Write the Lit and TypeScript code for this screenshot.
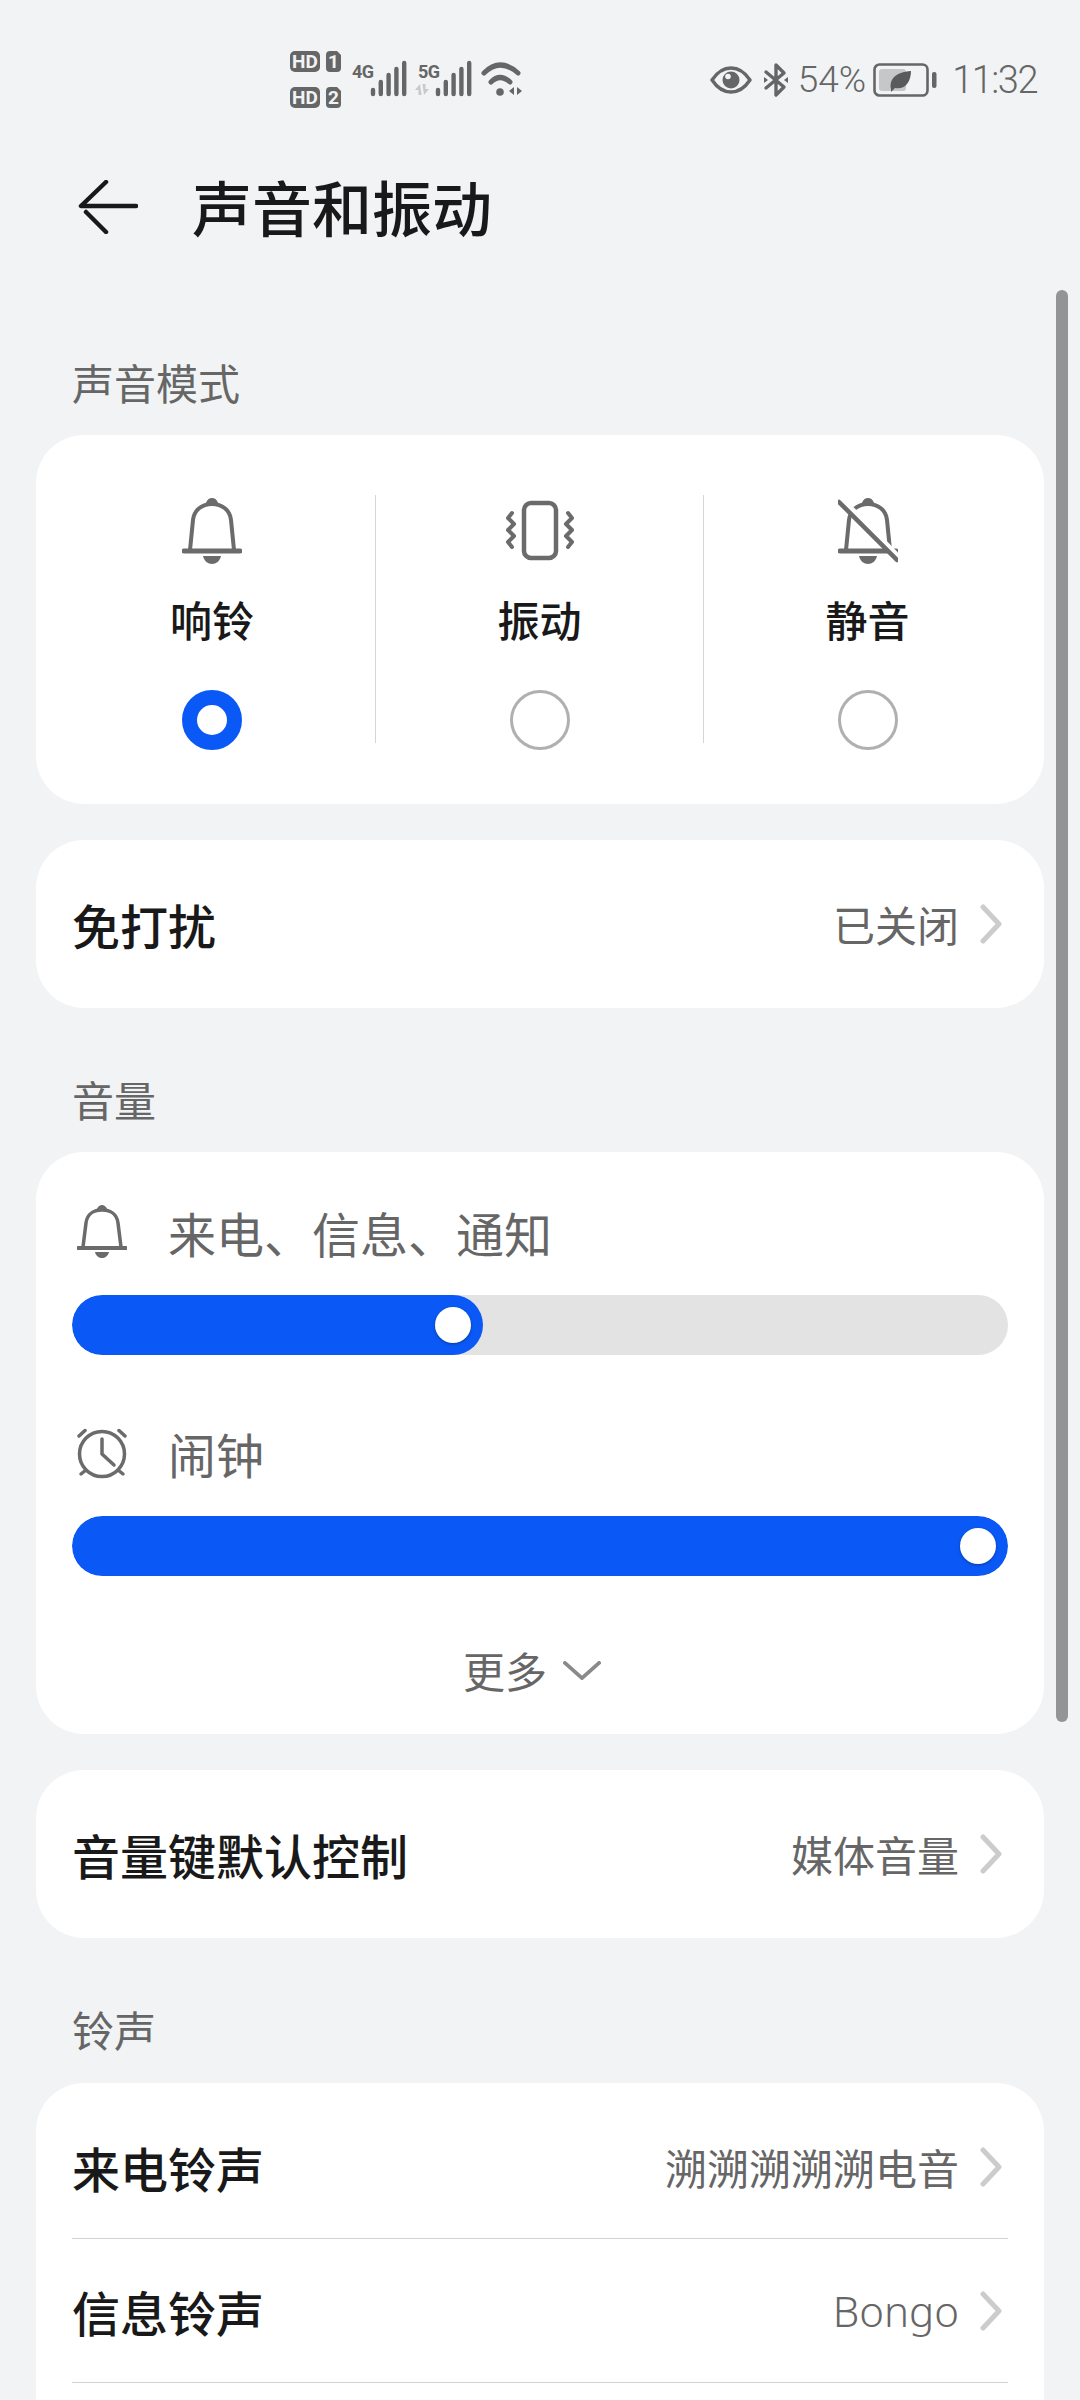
import { LitElement, html, css, svg } from "lit";
import { customElement } from "lit/decorators.js";

const bell = (slash = false) => html`<svg class="mode-icon" viewBox="0 0 60 66" width="60" height="66" fill="none" stroke="#6b6b6b" stroke-width="4" stroke-linecap="round">
  <path d="M8 52 L11 22 C12 12 20 6 30 6 C40 6 48 12 49 22 L52 52"></path>
  <path d="M2 53 H58" stroke-width="5"></path>
  <path d="M25 5 C26 2 28 1 30 1 C32 1 34 2 35 5 Z" fill="#6b6b6b" stroke-width="2"></path>
  <path d="M21 58 H39 C38 63 34 66 30 66 C26 66 22 63 21 58 Z" fill="#6b6b6b" stroke="none"></path>
  ${slash ? svg`<path d="M6 3 L60 58" stroke="#fff" stroke-width="5" stroke-linecap="butt"></path><path d="M1 4 L59 62" stroke-width="4.5"></path>` : null}
</svg>`;

const vibrate = html`<svg class="mode-icon" viewBox="0 0 68 66" width="68" height="66" fill="none" stroke="#6b6b6b" stroke-width="4.5" stroke-linecap="round" stroke-linejoin="round">
  <rect x="18" y="5" width="32" height="55" rx="7"></rect>
  <path d="M6 15 L2 20 L8 26 L2 32 L8 38 L2 44 L6 49" stroke-width="4"></path>
  <path d="M62 15 L66 20 L60 26 L66 32 L60 38 L66 44 L62 49" stroke-width="4"></path>
</svg>`;

const smallBell = html`<svg class="vol-icon" viewBox="0 0 50 54" width="50" height="54" fill="none" stroke="#6b6b6b" stroke-width="3.5" stroke-linecap="round">
  <path d="M6 42 L9 18 C10 9 17 5 25 5 C33 5 40 9 41 18 L44 42"></path>
  <path d="M1 43 H49" stroke-width="4"></path>
  <path d="M21 4 C22 2 24 1 25 1 C26 1 28 2 29 4 Z" fill="#6b6b6b" stroke-width="2"></path>
  <path d="M18 47 H32 C31 51 28 53 25 53 C22 53 19 51 18 47 Z" fill="#6b6b6b" stroke="none"></path>
</svg>`;

const alarm = html`<svg class="vol-icon" viewBox="0 0 50 52" width="50" height="52" fill="none" stroke="#6b6b6b" stroke-width="3.5" stroke-linecap="round">
  <circle cx="25" cy="27" r="22.5"></circle>
  <path d="M25 12 V27 L37 38"></path>
  <path d="M2 9 L8 3.5"></path>
  <path d="M48 9 L42 3.5"></path>
  <path d="M4 47 L9 43"></path>
  <path d="M46 47 L41 43"></path>
</svg>`;

const chevron = html`<svg class="chev" viewBox="0 0 22 40" width="22" height="40" fill="none" stroke="#cccccc" stroke-width="5" stroke-linecap="round" stroke-linejoin="round"><path d="M3 3 L19 20 L3 37"></path></svg>`;

const bars = (x0: number) => [0, 1, 2, 3, 4].map((i) => {
  const x = x0 + i * 7.8;
  const tops = [39, 31, 24, 18, 12];
  return svg`<line x1=${x} x2=${x} y1=${tops[i]} y2="43" stroke="#666" stroke-width="4.4" stroke-linecap="round"></line>`;
});

const leftStatus = html`<svg class="st-left" viewBox="0 0 232 57" width="232" height="57">
  <rect x="0" y="0" width="30" height="21" rx="5" fill="#666"></rect>
  <text x="15" y="17" class="hd" text-anchor="middle">HD</text>
  <path d="M36 4 a4 4 0 0 1 4 -4 h7 l4 4 v13 a4 4 0 0 1 -4 4 h-7 a4 4 0 0 1 -4 -4 z" fill="#666"></path>
  <text x="43.5" y="17" class="hd" text-anchor="middle">1</text>
  <rect x="0" y="36" width="30" height="21" rx="5" fill="#666"></rect>
  <text x="15" y="53" class="hd" text-anchor="middle">HD</text>
  <path d="M36 40 a4 4 0 0 1 4 -4 h7 l4 4 v13 a4 4 0 0 1 -4 4 h-7 a4 4 0 0 1 -4 -4 z" fill="#666"></path>
  <text x="43.5" y="53" class="hd" text-anchor="middle">2</text>
  <text x="62" y="27" class="net">4G</text>
  ${bars(83)}
  <text x="128" y="27" class="net">5G</text>
  ${bars(148)}
  <path d="M130 33 l-5 6 h3.5 v5 h3 z M134 44 l5 -6 h-3.5 v-5 h-3 z" fill="#c9c9c9"></path>
  <g fill="none" stroke="#666" stroke-width="5" stroke-linecap="round">
    <path d="M194 22 Q210 6 228 22"></path>
    <path d="M201 31 Q210 22 220 31"></path>
  </g>
  <circle cx="210" cy="41" r="3.8" fill="#666"></circle>
  <path d="M219 40 l5 -4 v8 z M232 40 l-5 -4 v8 z" fill="#666"></path>
</svg>`;

const eye = html`<svg viewBox="0 0 42 28" width="42" height="28">
  <path d="M2 14 C8 5 14 2 21 2 C28 2 34 5 40 14 C34 23 28 26 21 26 C14 26 8 23 2 14 Z" fill="none" stroke="#666" stroke-width="3.4" stroke-linejoin="round"></path>
  <circle cx="21" cy="14" r="8.5" fill="#666"></circle>
  <circle cx="18" cy="10.5" r="2.8" fill="#f1f3f5"></circle>
</svg>`;

const bluetooth = html`<svg viewBox="0 0 26 36" width="26" height="36" fill="none" stroke="#666" stroke-width="3.4" stroke-linecap="round" stroke-linejoin="round">
  <path d="M3 10 L21 25 L13 33 V3 L21 11 L3 26"></path>
  <path d="M1 15 L5 18 L1 21 Z M25 15 L21 18 L25 21 Z" fill="#666" stroke="none"></path>
</svg>`;

const battery = html`<svg viewBox="0 0 64 34" width="64" height="34">
  <rect x="1.5" y="1.5" width="53" height="31" rx="5" fill="none" stroke="#666" stroke-width="2.6"></rect>
  <rect x="6" y="6" width="27" height="22" rx="3" fill="#c6c7c9"></rect>
  <rect x="59" y="9" width="4.5" height="16" rx="2" fill="#666"></rect>
  <path d="M18 26 C16 17 22 9 38 8 C38 19 32 27 22 25 L18 29 Z" fill="#5a5a5a"></path>
</svg>`;

@customElement("app-root")
export class AppRoot extends LitElement {
  static styles = css`
    :host {
      display: block;
      position: relative;
      width: 1080px;
      height: 2400px;
      overflow: hidden;
      background: #f1f3f5;
      font-family: "Noto Sans CJK SC", "Noto Sans", sans-serif;
      color: #191919;
    }
    .status { display: flex; align-items: center; height: 160px; }
    .st-left { margin-left: 290px; margin-top: -1px; display: block; }
    .st-right { margin-left: auto; padding-right: 43px; display: flex; align-items: center; color: #666; font-family: Roboto, sans-serif; font-weight: 300; }
    .st-right svg { display: block; }
    .hd { font: 700 19px Roboto, sans-serif; fill: #f1f3f5; }
    .net { font: 700 18px Roboto, sans-serif; fill: #666; letter-spacing: -0.6px; }
    .eye { margin-right: 11px; }
    .bt { margin-right: 9px; }
    .pct { font-size: 37px; line-height: 44px; margin-right: 7px; }
    .time { font-size: 38px; line-height: 44px; margin-left: 15px; letter-spacing: -1.5px; }
    .header { display: flex; align-items: center; height: 98px; }
    .back { margin: -4px 0 0 78px; display: block; }
    .title { margin: 0 0 6px 54px; font-size: 60px; line-height: 92px; font-weight: 500; }
    .section { margin: 0 0 23px 72px; font-size: 42px; line-height: 60px; color: #666; }
    .section.first { margin-top: 94px; margin-bottom: 23px; }
    .section.mid { margin-top: 61px; }
    .section.last { margin-bottom: 24px; }
    .card { margin: 0 36px; background: #fff; border-radius: 48px; }
    .card + .card { margin-top: 36px; }
    .modes { display: grid; grid-template-columns: repeat(3, 328px); padding: 60px 13px 0 11px; height: 369px; box-sizing: border-box; }
    .mode { display: flex; flex-direction: column; align-items: center; height: 248px; box-sizing: border-box; }
    .mode:first-child { padding-left: 2px; }
    .mode + .mode { border-left: 1px solid #d5d5d5; }
    .mode-icon { display: block; margin-top: 3px; flex: none; }
    .mode-label { font-size: 42px; line-height: 60px; font-weight: 500; margin-top: 25px; flex: none; }
    .radio { width: 60px; height: 60px; box-sizing: border-box; border-radius: 50%; border: 3px solid #b0b0b0; margin-top: 41px; flex: none; }
    .radio.on { border: 15px solid #0a59f7; }
    .row { display: flex; align-items: center; height: 168px; padding: 0 42px 0 36px; }
    .row-title { font-size: 48px; line-height: 64px; font-weight: 500; }
    .row-value { margin-left: auto; font-size: 42px; line-height: 60px; color: #666; margin-right: 21px; }
    .latin { font-family: "Noto Sans", "Noto Sans CJK SC", sans-serif; font-weight: 300; }
    .chev { display: block; flex: none; }
    .volumes { height: 582px; box-sizing: border-box; padding: 50px 36px 0; }
    .vol-head { display: flex; align-items: center; height: 60px; }
    .vol-head + .slider { margin-top: 33px; }
    .vol-head.second { margin-top: 68px; }
    .vol-icon { display: block; margin-left: 5px; }
    .vol-text { margin-left: 41px; font-size: 48px; line-height: 60px; color: #666; }
    .slider { height: 60px; border-radius: 30px; background: #e3e3e3; display: flex; overflow: hidden; }
    .fill { background: #0a59f7; border-radius: 30px; display: flex; align-items: center; justify-content: flex-end; padding-right: 12px; box-sizing: border-box; height: 60px; }
    .thumb { width: 36px; height: 36px; border-radius: 50%; background: #fff; box-shadow: 0 1px 3px rgba(0,0,0,.35); flex: none; }
    .more { display: flex; align-items: center; justify-content: center; margin-top: 64px; height: 60px; padding-right: 16px; }
    .more-text { font-size: 42px; line-height: 60px; color: #666; }
    .more svg { display: block; margin-left: 16px; }
    .rows { padding: 0 36px; height: 400px; }
    .rows .row { padding: 0 6px 0 0; height: 143px; border-bottom: 1px solid #d2d2d2; }
    .rows .row:first-child { height: 156px; padding-top: 12px; box-sizing: border-box; }
    .scrollbar { position: absolute; left: 1056px; top: 290px; width: 12px; height: 1432px; border-radius: 6px; background: #939496; }
  `;

  private row(title: string, value: string, latin = false) {
    return html`<div class="row">
      <span class="row-title">${title}</span>
      <span class="row-value ${latin ? "latin" : ""}">${value}</span>
      ${chevron}
    </div>`;
  }

  private mode(icon: unknown, label: string, on = false) {
    return html`<div class="mode">
      ${icon}
      <div class="mode-label">${label}</div>
      <div class="radio ${on ? "on" : ""}"></div>
    </div>`;
  }

  private slider(pct: number) {
    return html`<div class="slider"><div class="fill" style="width:${pct}%"><div class="thumb"></div></div></div>`;
  }

  render() {
    return html`
      <div class="status">
        ${leftStatus}
        <div class="st-right">
          <span class="eye">${eye}</span>
          <span class="bt">${bluetooth}</span>
          <span class="pct">54%</span>
          ${battery}
          <span class="time">11:32</span>
        </div>
      </div>
      <div class="header">
        <svg class="back" viewBox="0 0 60 54" width="60" height="54" fill="none" stroke="#191919" stroke-width="4.5" stroke-linecap="round" stroke-linejoin="round">
          <path d="M28 2 L3 26 H58"></path>
          <path d="M8 32 L28 52"></path>
        </svg>
        <div class="title">声音和振动</div>
      </div>

      <div class="section first">声音模式</div>
      <div class="card modes">
        ${this.mode(bell(), "响铃", true)}
        ${this.mode(vibrate, "振动")}
        ${this.mode(bell(true), "静音")}
      </div>
      <div class="card">${this.row("免打扰", "已关闭")}</div>

      <div class="section mid">音量</div>
      <div class="card volumes">
        <div class="vol-head">${smallBell}<span class="vol-text">来电、信息、通知</span></div>
        ${this.slider(43.9)}
        <div class="vol-head second">${alarm}<span class="vol-text">闹钟</span></div>
        ${this.slider(100)}
        <div class="more">
          <span class="more-text">更多</span>
          <svg viewBox="0 0 40 20" width="38" height="19" fill="none" stroke="#8a8a8a" stroke-width="4" stroke-linecap="round" stroke-linejoin="round"><path d="M2 2 L20 18 L38 2"></path></svg>
        </div>
      </div>
      <div class="card">${this.row("音量键默认控制", "媒体音量")}</div>

      <div class="section mid last">铃声</div>
      <div class="card rows">
        ${this.row("来电铃声", "溯溯溯溯溯电音")}
        ${this.row("信息铃声", "Bongo", true)}
      </div>
      <div class="scrollbar"></div>
    `;
  }
}
